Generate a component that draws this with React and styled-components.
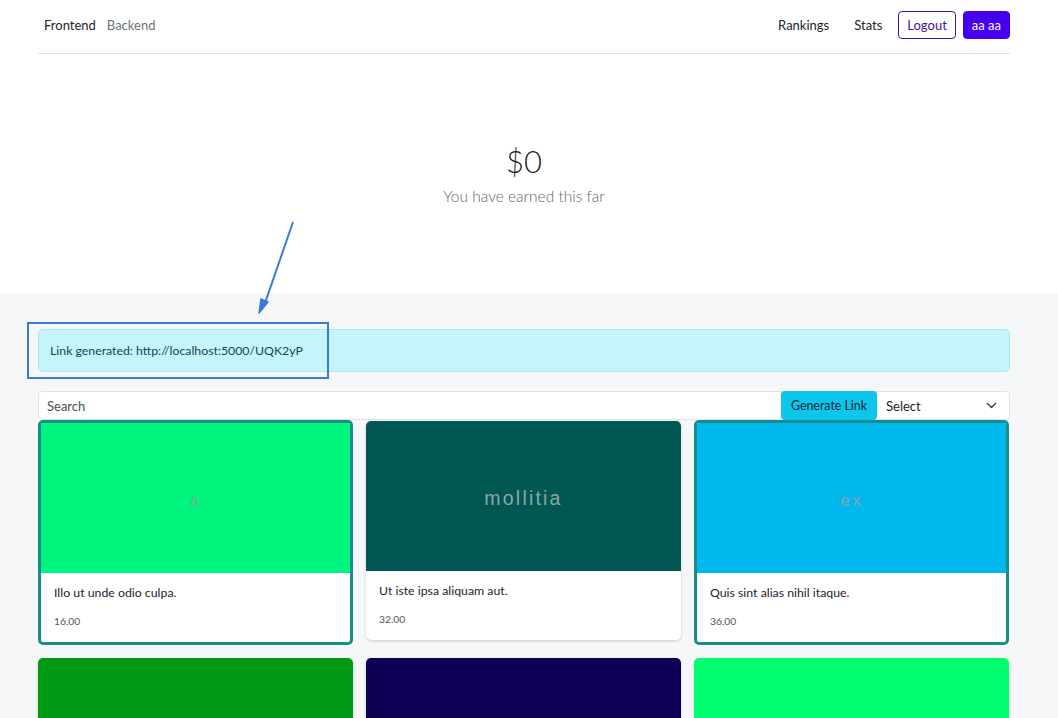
import React from "react";
import styled, { createGlobalStyle } from "styled-components";

const GlobalStyle = createGlobalStyle`
  html, body {
    margin: 0;
    padding: 0;
    background: #ffffff;
    font-family: Lato, "Noto Sans", sans-serif;
    color: #212529;
  }
`;

const Page = styled.div`
  position: relative;
  width: 1058px;
  min-height: 718px;
  overflow: hidden;
`;

const Container = styled.div`
  width: 972px;
  margin: 0 48px 0 38px;
`;

const Header = styled.nav`
  display: flex;
  align-items: center;
  justify-content: space-between;
  height: 54px;
  border-bottom: 1px solid #dee2e6;
  padding: 0 0 3px 6px;
  box-sizing: border-box;
`;

const NavGroup = styled.div`
  display: flex;
  align-items: center;
  gap: ${(p) => p.$gap || 0}px;
`;

const NavLink = styled.a`
  font-size: 13px;
  color: ${(p) => (p.$active ? "#212529" : "#6c757d")};
  text-decoration: none;
  margin-right: ${(p) => p.$mr || 0}px;
`;

const Button = styled.button`
  font-family: inherit;
  font-size: 13px;
  height: 28px;
  padding: 0 8px;
  border-radius: 4px;
  cursor: pointer;
  border: 1px solid #4a0fa8;
  background: ${(p) => (p.$solid ? "#4400ee" : "#ffffff")};
  border-color: ${(p) => (p.$solid ? "#4400ee" : "#4a0fa8")};
  color: ${(p) => (p.$solid ? "#ffffff" : "#4a0fa8")};
`;

const Hero = styled.section`
  height: 239px;
  display: flex;
  flex-direction: column;
  align-items: center;
  padding-top: 87px;
  box-sizing: border-box;
`;

const Amount = styled.div`
  font-size: 31px;
  font-weight: 300;
  color: #212529;
  line-height: 40px;
`;

const Subtitle = styled.div`
  font-size: 15.5px;
  font-weight: 300;
  color: #5f666d;
  margin-top: 6px;
`;

const Section = styled.section`
  background: #f6f7f9;
  padding: 36px 0 0;
  min-height: 425px;
`;

const Alert = styled.div`
  background: #c6f4fb;
  border: 1px solid #a6e9f5;
  border-radius: 5px;
  color: #08495a;
  font-size: 12.3px;
  height: 43px;
  box-sizing: border-box;
  display: flex;
  align-items: center;
  padding: 0 11px 1px;
`;

const SearchBar = styled.div`
  margin-top: 19px;
  display: flex;
  align-items: center;
  height: 29px;
  background: #ffffff;
  border: 1px solid #dee2e6;
  border-radius: 4px;
  box-sizing: border-box;
`;

const SearchInput = styled.input`
  flex: 1;
  border: none;
  outline: none;
  background: transparent;
  font-family: inherit;
  font-size: 13px;
  padding: 0 8px;
  color: #495057;
  &::placeholder {
    color: #495057;
  }
`;

const GenerateButton = styled.button`
  font-family: inherit;
  font-size: 12.4px;
  height: 29px;
  width: 96px;
  padding: 0;
  border: none;
  border-radius: 4px;
  background: #0dc6ec;
  color: #0a2a33;
  cursor: pointer;
`;

const SelectBox = styled.div`
  width: 132px;
  display: flex;
  align-items: center;
  justify-content: space-between;
  padding: 0 12px 0 9px;
  box-sizing: border-box;
  font-size: 13px;
  color: #212529;
`;

const Grid = styled.div`
  display: grid;
  grid-template-columns: repeat(3, 315px);
  column-gap: 13px;
  row-gap: 12px;
  align-items: start;
`;

const Card = styled.div`
  background: #ffffff;
  border-radius: 5px;
  overflow: hidden;
  box-sizing: border-box;
  border: ${(p) => (p.$selected ? "3px solid #178e8b" : "none")};
  margin-top: ${(p) => (p.$selected ? 0 : 1)}px;
  box-shadow: ${(p) => (p.$selected ? "none" : "0 1px 3px rgba(0,0,0,0.18)")};
`;

const CardImage = styled.div`
  height: 150px;
  padding-top: 5px;
  box-sizing: border-box;
  background: ${(p) => p.$bg};
  display: flex;
  align-items: center;
  justify-content: center;
  font-family: "Liberation Sans", Arial, sans-serif;
  font-size: ${(p) => p.$size || 17}px;
  letter-spacing: 2.2px;
  color: ${(p) => p.$fg || "rgba(170,170,170,0.8)"};
`;

const CardBody = styled.div`
  padding: 10px 13px 13px;
`;

const CardTitle = styled.div`
  font-size: 12.3px;
  color: #212529;
  line-height: 20px;
`;

const CardPrice = styled.div`
  font-size: 10.3px;
  color: #555;
  margin-top: 10px;
  line-height: 16px;
`;

const Overlay = styled.svg`
  position: absolute;
  left: 0;
  top: 0;
  pointer-events: none;
`;

const Chevron = () => (
  <svg width="11" height="11" viewBox="0 0 16 16" fill="none">
    <path d="M2 5l6 6 6-6" stroke="#343a40" strokeWidth="1.8" strokeLinecap="round" strokeLinejoin="round" />
  </svg>
);

const products = [
  { title: "Illo ut unde odio culpa.", price: "16.00", bg: "#00f57f", label: "a", size: 16, fg: "rgba(150,150,150,0.75)", selected: true },
  { title: "Ut iste ipsa aliquam aut.", price: "32.00", bg: "#005753", label: "mollitia", size: 19.5, fg: "#8da8a5" },
  { title: "Quis sint alias nihil itaque.", price: "36.00", bg: "#00b7ee", label: "ex", size: 17, fg: "rgba(160,160,160,0.85)", selected: true },
  { title: "", price: "", bg: "#009913", label: "" },
  { title: "", price: "", bg: "#0f0055", label: "" },
  { title: "", price: "", bg: "#00ff6e", label: "" },
];

const App = () => {
  return (
    <Page>
      <GlobalStyle />
      <Container>
        <Header>
          <NavGroup>
            <NavLink $active $mr={11}>Frontend</NavLink>
            <NavLink>Backend</NavLink>
          </NavGroup>
          <NavGroup $gap={7}>
            <NavLink $active $mr={18}>Rankings</NavLink>
            <NavLink $active $mr={9}>Stats</NavLink>
            <Button>Logout</Button>
            <Button $solid>aa aa</Button>
          </NavGroup>
        </Header>
        <Hero>
          <Amount>$0</Amount>
          <Subtitle>You have earned this far</Subtitle>
        </Hero>
      </Container>

      <Section>
        <Container>
          <Alert>Link generated: http://localhost:5000/UQK2yP</Alert>
          <SearchBar>
            <SearchInput placeholder="Search" />
            <GenerateButton>Generate Link</GenerateButton>
            <SelectBox>
              <span>Select</span>
              <Chevron />
            </SelectBox>
          </SearchBar>
          <Grid>
            {products.map((p, i) => (
              <Card key={i} $selected={p.selected}>
                <CardImage $bg={p.bg} $size={p.size} $fg={p.fg}>{p.label}</CardImage>
                {p.title && (
                  <CardBody>
                    <CardTitle>{p.title}</CardTitle>
                    <CardPrice>{p.price}</CardPrice>
                  </CardBody>
                )}
              </Card>
            ))}
          </Grid>
        </Container>
      </Section>

      <Overlay width="1058" height="718" viewBox="0 0 1058 718">
        <rect x="28" y="323" width="300" height="55" fill="none" stroke="#3a7bd5" strokeWidth="2" />
        <line x1="293" y1="222" x2="264" y2="306" stroke="#3a7bd5" strokeWidth="2" />
        <path d="M259 313 L261 299 L268 302 Z" fill="#3a7bd5" stroke="#3a7bd5" strokeWidth="1.5" strokeLinejoin="round" />
      </Overlay>
    </Page>
  );
};

export default App;
